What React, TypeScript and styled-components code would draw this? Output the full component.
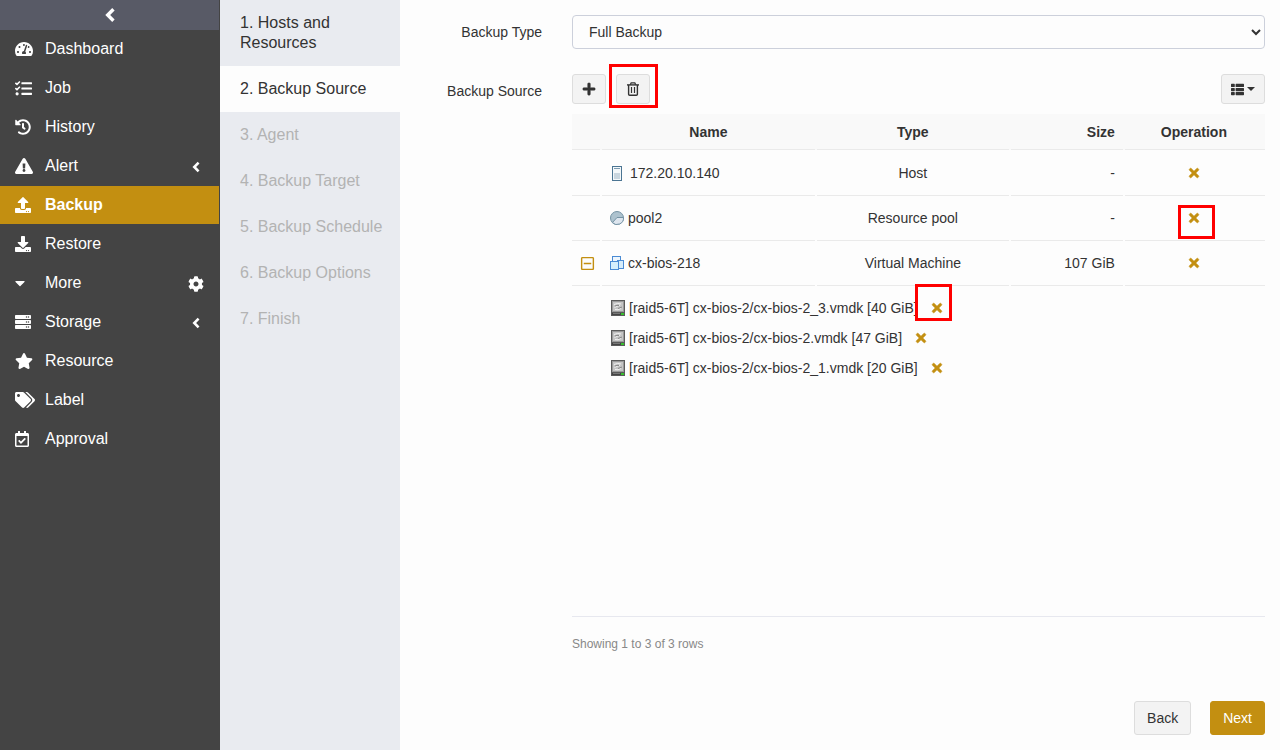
import React from "react";
import styled, { createGlobalStyle, css } from "styled-components";
import {
  FaTachometerAlt,
  FaTasks,
  FaHistory,
  FaExclamationTriangle,
  FaUpload,
  FaDownload,
  FaCaretDown,
  FaCog,
  FaServer,
  FaStar,
  FaTags,
  FaRegCalendarCheck,
  FaRegMinusSquare,
  FaPlus,
  FaThList,
  FaTimes,
} from "react-icons/fa";

const gold = "#c38f11";

const GlobalStyle = createGlobalStyle`
  *, *::before, *::after { box-sizing: border-box; }
  body {
    margin: 0;
    background: #fdfdfd;
    color: #333;
    font-family: "Liberation Sans", Arial, sans-serif;
    font-size: 14px;
    line-height: 20px;
  }
  button, select { font: inherit; color: inherit; }
  svg { display: block; flex: none; }
`;

const Page = styled.div`
  display: grid;
  grid-template-columns: 220px 180px minmax(0, 1fr);
  min-height: 100vh;
`;

const Sidebar = styled.nav`
  background: #444;
  border-right: 1px solid #444;
`;

const Collapse = styled.button`
  display: flex;
  align-items: center;
  justify-content: center;
  width: 100%;
  height: 30px;
  padding: 0;
  border: 0;
  background: #585a66;
  color: #fff;
  cursor: pointer;
`;

const MenuList = styled.ul`
  display: flex;
  flex-direction: column;
  gap: 1px;
  margin: 0;
  padding: 0;
  list-style: none;
`;

const MenuItem = styled.li<{ $active?: boolean }>`
  display: flex;
  align-items: center;
  height: 38px;
  padding: 0 15px;
  color: #fff;
  ${(p) =>
    p.$active &&
    css`
      background: ${gold};
      font-weight: bold;
    `}
`;

const MenuLink = styled.a`
  display: flex;
  flex: 1;
  align-items: center;
  color: inherit;
  font-size: 16px;
  text-decoration: none;
`;

const MenuIcon = styled.span`
  width: 30px;
`;

const MenuAction = styled.button`
  display: flex;
  justify-content: center;
  width: 16px;
  padding: 2px 0 0;
  border: 0;
  background: none;
  color: #fff;
`;

const Steps = styled.ol`
  margin: 0;
  padding: 0;
  list-style: none;
  background: #e9ebf0;
`;

const Step = styled.li<{ $state: "done" | "current" | "todo" }>`
  padding: 13px 15px 13px 20px;
  font-size: 16px;
  color: ${(p) => (p.$state === "todo" ? "#b3b3b3" : "#333")};
  background: ${(p) => (p.$state === "current" ? "#fdfdfd" : "transparent")};
`;

const Main = styled.main`
  display: flex;
  flex-direction: column;
  padding: 15px;
`;

const FormRow = styled.div<{ $grow?: boolean }>`
  display: grid;
  grid-template-columns: 127px minmax(0, 1fr);
  column-gap: 30px;
  flex: ${(p) => (p.$grow ? "1" : "none")};
  margin-bottom: 25px;
`;

const FormLabel = styled.label`
  padding-top: 7px;
  text-align: right;
`;

const Select = styled.select`
  width: 100%;
  height: 34px;
  padding: 0 12px;
  border: 1px solid #ccd0db;
  border-radius: 4px;
  background: #fdfdfd;
`;

const Source = styled.div`
  display: flex;
  flex-direction: column;
`;

const Toolbar = styled.div`
  display: flex;
  gap: 10px;
  margin-bottom: 10px;
`;

const ToolButton = styled.button`
  display: flex;
  align-items: center;
  justify-content: center;
  gap: 3px;
  min-width: 34px;
  height: 30px;
  padding: 0 9px;
  border: 1px solid #ddd;
  border-radius: 3px;
  background: #f3f3f3;
`;

const Spacer = styled.span`
  flex: 1;
`;

const Marked = styled.span`
  position: relative;
  display: flex;
`;

const Highlight = styled.span<{ $top: number; $left: number; $width: number; $height: number }>`
  position: absolute;
  top: ${(p) => p.$top}px;
  left: ${(p) => p.$left}px;
  width: ${(p) => p.$width}px;
  height: ${(p) => p.$height}px;
  border: 3px solid #f00;
  pointer-events: none;
`;

const TableArea = styled.div`
  flex: 1;
  border-bottom: 1px solid #e7e8ef;
`;

const Table = styled.table`
  width: 100%;
  table-layout: fixed;
  border-collapse: separate;
  border-spacing: 0;
`;

const HeadRow = styled.tr`
  background: #f9f9f9;
`;

const cell = css<{ $align?: "left" | "center" | "right" }>`
  text-align: ${(p) => p.$align ?? "center"};
  background-image: linear-gradient(#eaeaea, #eaeaea);
  background-repeat: no-repeat;
  background-position: left bottom;
  background-size: calc(100% - 2px) 1px;
  &:last-child {
    background-size: 100% 1px;
  }
`;

const Th = styled.th<{ $align?: "left" | "center" | "right"; $width?: string }>`
  ${cell}
  width: ${(p) => p.$width ?? "auto"};
  height: 36px;
  padding: 0 10px 0 8px;
`;

const Td = styled.td<{ $align?: "left" | "center" | "right" }>`
  ${cell}
  height: 45px;
  padding: 0 10px 1px 8px;
  tr:first-child > & {
    height: 46px;
    padding-bottom: 0;
  }
  &:first-child {
    padding: 0 8px 1px;
  }
`;

const CellContent = styled.span<{ $gap?: number; $center?: boolean }>`
  display: flex;
  align-items: center;
  justify-content: ${(p) => (p.$center ? "center" : "flex-start")};
  gap: ${(p) => p.$gap ?? 0}px;
`;

const IconButton = styled.button`
  display: flex;
  align-items: center;
  justify-content: center;
  width: 14px;
  height: 20px;
  padding: 0;
  border: 0;
  background: none;
  color: ${gold};
  cursor: pointer;
`;

const DiskCell = styled.td`
  padding: 7px 9px;
`;

const DiskList = styled.ul`
  margin: 0;
  padding: 0;
  list-style: none;
`;

const Disk = styled.li`
  display: flex;
  align-items: center;
  gap: 4px;
  height: 30px;
`;

const DiskName = styled.span`
  margin-right: 8px;
  white-space: nowrap;
`;

const Summary = styled.p`
  margin: 17px 0 0;
  color: #888;
  font-size: 12px;
`;

const Footer = styled.footer`
  display: flex;
  justify-content: flex-end;
  gap: 19px;
  margin-top: 22px;
`;

const Button = styled.button<{ $primary?: boolean }>`
  height: 34px;
  padding: 0 12px;
  border: 1px solid ${(p) => (p.$primary ? gold : "#ddd")};
  border-radius: 3px;
  background: ${(p) => (p.$primary ? gold : "#f3f3f3")};
  color: ${(p) => (p.$primary ? "#fff" : "#333")};
`;

const ChevronIcon = ({ size }: { size: number }) => (
  <svg width={size} height={size} viewBox="0 0 14 14" aria-hidden="true">
    <path d="M10 2 5 7l5 5" fill="none" stroke="currentColor" strokeWidth="3" />
  </svg>
);

const TrashIcon = () => (
  <svg width="12" height="14" viewBox="0 0 12 14" fill="none" stroke="currentColor" aria-hidden="true">
    <path d="M0 2.900h12" strokeWidth="1.400" />
    <path d="M3.300 2.800 4.200.8h3.600l.9 2" strokeWidth="1.300" />
    <path d="M1.600 3v9.200q0 1.100 1.100 1.100h6.600q1.100 0 1.100-1.100V3" strokeWidth="1.400" />
    <path d="M4.500 5v6M7.500 5v6" strokeWidth="1.200" />
  </svg>
);

const CaretIcon = () => (
  <svg width="8" height="4" viewBox="0 0 8 4" aria-hidden="true">
    <path d="M0 0h8L4 4z" fill="currentColor" />
  </svg>
);

const HostIcon = () => (
  <svg width="14" height="16" viewBox="0 0 14 16" aria-hidden="true">
    <rect x="2.5" y="1.5" width="9" height="14" fill="#f4f8fa" stroke="#4b7593" />
    <path d="M4 3.5h6" stroke="#7d9bb0" />
    <rect x="4" y="8" width="6" height="6" fill="#c9d6df" />
  </svg>
);

const PoolIcon = () => (
  <svg width="14" height="14" viewBox="0 0 14 14" aria-hidden="true">
    <circle cx="7" cy="7" r="6.5" fill="#adc2ce" stroke="#7593a4" />
    <path d="M2.4 11.6 7 6.5h6.5A6.5 6.5 0 0 1 2.4 11.6z" fill="#dde5ee" stroke="#7593a4" />
  </svg>
);

const VmIcon = () => (
  <svg width="14" height="14" viewBox="0 0 14 14" aria-hidden="true">
    <rect x="2.5" y=".5" width="8" height="7" fill="#eef6fd" stroke="#4a8bd4" />
    <rect x="7.5" y="4.5" width="6" height="8" fill="#d5ecfb" stroke="#4a8bd4" />
    <rect x=".5" y="5.5" width="8" height="8" fill="#d5effc" stroke="#4a8bd4" />
  </svg>
);

const DiskIcon = () => (
  <svg width="14" height="16" viewBox="0 0 14 16" aria-hidden="true">
    <path d="M0 0h14v16H0z" fill="#5a5a5a" />
    <path d="M1 1h12v11H1z" fill="#9a9a9a" />
    <path d="M2 2h10v9H2z" fill="#c4c4c4" />
    <path d="M3 4.500q4-2 7-.5M3.500 7.500 9 5M4 9.500q3 1 6-1" fill="none" stroke="#f0f0f0" />
    <path d="M4 6q2-1 4-.5M7 8.500 11 7" fill="none" stroke="#888" />
    <path d="M1 13h12v2H1z" fill="#444" />
    <path d="M2 13.500h7" stroke="#777" />
    <path d="M10 14h3" stroke="#35c02c" strokeWidth="2" />
  </svg>
);

const menu = [
  { label: "Dashboard", icon: <FaTachometerAlt size={18} /> },
  { label: "Job", icon: <FaTasks size={17} /> },
  { label: "History", icon: <FaHistory size={16} /> },
  { label: "Alert", icon: <FaExclamationTriangle size={18} />, action: <ChevronIcon size={12} /> },
  { label: "Backup", icon: <FaUpload size={16} />, active: true },
  { label: "Restore", icon: <FaDownload size={16} /> },
  { label: "More", icon: <FaCaretDown size={16} preserveAspectRatio="xMinYMid meet" />, action: <FaCog size={16} /> },
  { label: "Storage", icon: <FaServer size={16} />, action: <ChevronIcon size={12} /> },
  { label: "Resource", icon: <FaStar size={18} /> },
  { label: "Label", icon: <FaTags size={20} /> },
  { label: "Approval", icon: <FaRegCalendarCheck size={16} preserveAspectRatio="xMinYMid meet" /> },
];

const steps: { label: string; state: "done" | "current" | "todo" }[] = [
  { label: "1. Hosts and Resources", state: "done" },
  { label: "2. Backup Source", state: "current" },
  { label: "3. Agent", state: "todo" },
  { label: "4. Backup Target", state: "todo" },
  { label: "5. Backup Schedule", state: "todo" },
  { label: "6. Backup Options", state: "todo" },
  { label: "7. Finish", state: "todo" },
];

const sources = [
  { name: "172.20.10.140", type: "Host", size: "-", icon: <HostIcon />, gap: 6 },
  { name: "pool2", type: "Resource pool", size: "-", icon: <PoolIcon />, gap: 4, marked: true },
  { name: "cx-bios-218", type: "Virtual Machine", size: "107 GiB", icon: <VmIcon />, gap: 4, expanded: true },
];

const disks = [
  { name: "[raid5-6T] cx-bios-2/cx-bios-2_3.vmdk [40 GiB]", marked: true },
  { name: "[raid5-6T] cx-bios-2/cx-bios-2.vmdk [47 GiB]" },
  { name: "[raid5-6T] cx-bios-2/cx-bios-2_1.vmdk [20 GiB]" },
];

const RemoveButton = ({ name }: { name: string }) => (
  <IconButton type="button" aria-label={`Remove ${name}`}>
    <FaTimes size={14} stroke="currentColor" strokeWidth={20} />
  </IconButton>
);

export default function App() {
  return (
    <>
      <GlobalStyle />
      <Page>
        <Sidebar>
          <Collapse type="button" aria-label="Collapse menu">
            <ChevronIcon size={16} />
          </Collapse>
          <MenuList>
            {menu.map((m) => (
              <MenuItem key={m.label} $active={m.active}>
                <MenuLink href="#">
                  <MenuIcon>{m.icon}</MenuIcon>
                  {m.label}
                </MenuLink>
                {m.action && (
                  <MenuAction type="button" aria-label={`${m.label} options`}>
                    {m.action}
                  </MenuAction>
                )}
              </MenuItem>
            ))}
          </MenuList>
        </Sidebar>
        <Steps>
          {steps.map((s) => (
            <Step key={s.label} $state={s.state}>
              {s.label}
            </Step>
          ))}
        </Steps>
        <Main>
          <FormRow>
            <FormLabel htmlFor="backup-type">Backup Type</FormLabel>
            <Select id="backup-type">
              <option>Full Backup</option>
            </Select>
          </FormRow>
          <FormRow $grow>
            <FormLabel as="span">Backup Source</FormLabel>
            <Source>
              <Toolbar>
                <ToolButton type="button" aria-label="Add">
                  <FaPlus size={14} stroke="currentColor" strokeWidth={16} />
                </ToolButton>
                <Marked>
                  <ToolButton type="button" aria-label="Delete">
                    <TrashIcon />
                  </ToolButton>
                  <Highlight $top={-10} $left={-7} $width={49} $height={44} />
                </Marked>
                <Spacer />
                <ToolButton type="button" aria-label="Columns">
                  <FaThList size={13} />
                  <CaretIcon />
                </ToolButton>
              </Toolbar>
              <TableArea>
                <Table>
                  <thead>
                    <HeadRow>
                      <Th $width="30px" />
                      <Th $width="31%">Name</Th>
                      <Th $width="28%">Type</Th>
                      <Th $width="114px" $align="right">Size</Th>
                      <Th>Operation</Th>
                    </HeadRow>
                  </thead>
                  <tbody>
                    {sources.map((s) => (
                      <tr key={s.name}>
                        <Td $align="left">
                          {s.expanded && (
                            <IconButton type="button" aria-label="Collapse disks">
                              <FaRegMinusSquare size={15} />
                            </IconButton>
                          )}
                        </Td>
                        <Td $align="left">
                          <CellContent $gap={s.gap}>
                            {s.icon}
                            {s.name}
                          </CellContent>
                        </Td>
                        <Td>{s.type}</Td>
                        <Td $align="right">{s.size}</Td>
                        <Td>
                          <CellContent $center>
                            <Marked>
                              <RemoveButton name={s.name} />
                              {s.marked && <Highlight $top={-3} $left={-9} $width={37} $height={34} />}
                            </Marked>
                          </CellContent>
                        </Td>
                      </tr>
                    ))}
                    <tr>
                      <td />
                      <DiskCell colSpan={4}>
                        <DiskList>
                          {disks.map((d) => (
                            <Disk key={d.name}>
                              <DiskIcon />
                              <DiskName>{d.name}</DiskName>
                              <Marked>
                                <RemoveButton name={d.name} />
                                {d.marked && <Highlight $top={-14} $left={-15} $width={37} $height={37} />}
                              </Marked>
                            </Disk>
                          ))}
                        </DiskList>
                      </DiskCell>
                    </tr>
                  </tbody>
                </Table>
              </TableArea>
              <Summary>Showing 1 to 3 of 3 rows</Summary>
            </Source>
          </FormRow>
          <Footer>
            <Button type="button">Back</Button>
            <Button type="button" $primary>Next</Button>
          </Footer>
        </Main>
      </Page>
    </>
  );
}
